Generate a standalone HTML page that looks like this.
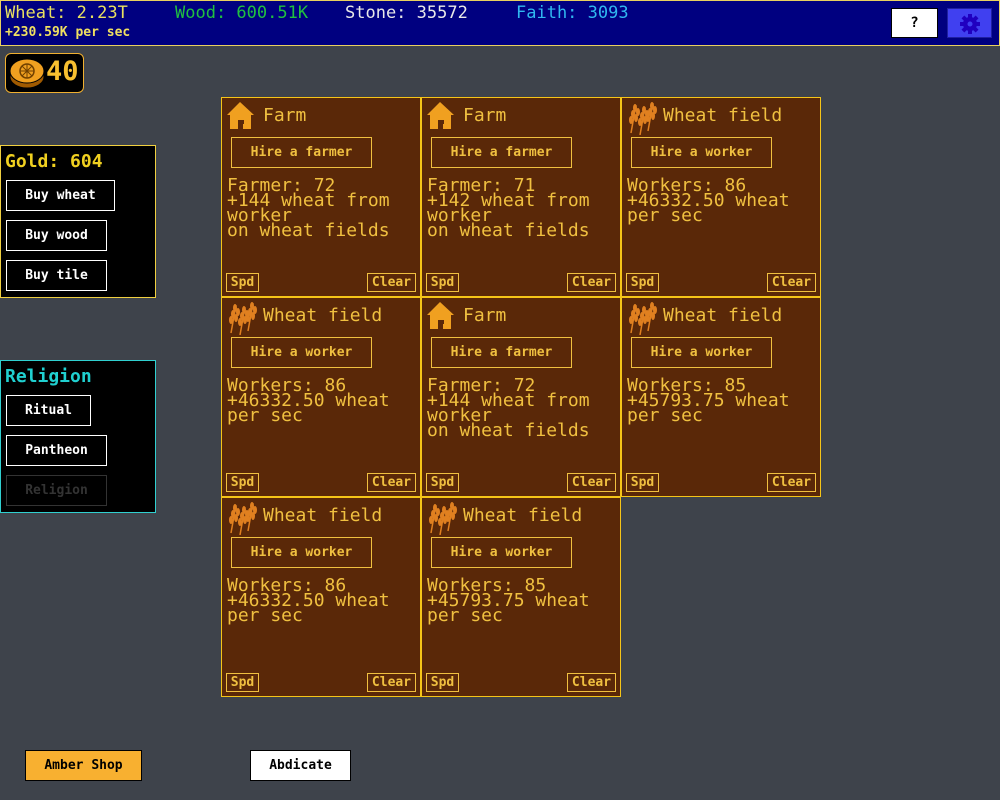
<!DOCTYPE html>
<html><head><style>
*{box-sizing:border-box;margin:0;padding:0}
body{width:1000px;height:800px;background:#3e434b;font-family:"DejaVu Sans Mono","Liberation Mono",monospace;position:relative;overflow:hidden}
.hdr{position:absolute;left:0;top:0;width:1000px;height:46px;background:#000080;border:1px solid #e8d060;border-top:1px solid #e8d060}
.hdr span{position:absolute;top:2px;font-size:17px}
.abs{position:absolute}
.tile{position:absolute;width:200px;height:200px;background:#5a2808;border:1px solid #f5c518;color:#f0c040}
.tile .t{position:absolute;left:41px;top:7px;font-size:18px}
.tile .ic{position:absolute;left:4px;top:3px}
.tile .hb{position:absolute;left:9px;top:39px;width:141px;height:31px;border:1px solid #f0c040;font-size:13px;text-align:center;line-height:29px;font-weight:bold}
.tile .s{position:absolute;left:5px;top:80px;font-size:18px;line-height:15px;white-space:pre}
.tile .sp{position:absolute;left:4px;top:175px;width:33px;height:19px;border:1px solid #f0c040;font-size:13px;line-height:17px;text-align:center;font-weight:bold}
.tile .cl{position:absolute;right:4px;top:175px;width:49px;height:19px;border:1px solid #f0c040;font-size:13px;line-height:17px;text-align:center;font-weight:bold}
.panel{position:absolute;background:#000}
.btn{position:absolute;left:5px;height:31px;border:1px solid #fff;color:#fff;font-size:13px;font-weight:bold;text-align:center;line-height:29px;background:#000}
</style></head><body>
<div class="hdr">
<span style="left:4px;color:#e8e060">Wheat: 2.23T</span>
<span style="left:174px;color:#20c040">Wood: 600.51K</span>
<span style="left:344px;color:#e8e8e8">Stone: 35572</span>
<span style="left:515px;color:#30b8f0">Faith: 3093</span>
<span style="left:4px;top:24px;font-size:13px;font-weight:bold;color:#f0e060">+230.59K per sec</span>
<div class="abs" style="left:890px;top:7px;width:47px;height:30px;background:#fff;border:1px solid #000;text-align:center;line-height:28px;font-size:14px;font-weight:bold">?</div>
<div class="abs" style="left:946px;top:7px;width:45px;height:30px;background:#4040f0;border:1px solid #2020a0">
<svg width="45" height="30" viewBox="0 0 45 30"><g fill="#2000c0" transform="translate(22 15)"><circle r="7"/><g id="tt"><rect x="-2" y="-10" width="4" height="20"/><rect x="-10" y="-2" width="20" height="4"/></g><use href="#tt" transform="rotate(45)"/></g><circle cx="22" cy="15" r="2.5" fill="#4040f0"/></svg></div>
</div>
<div class="abs" style="left:5px;top:53px;width:79px;height:40px;background:#000;border:1px solid #f0b030;border-radius:6px">
<svg class="abs" style="left:2px;top:2px" width="38" height="34" viewBox="0 0 38 34"><ellipse cx="19" cy="21" rx="17" ry="11" fill="#a05a00" stroke="#000"/><ellipse cx="19" cy="15" rx="17" ry="12" fill="#f0a020" stroke="#000"/><circle cx="19" cy="15" r="7" fill="none" stroke="#704000" stroke-width="1.5"/><path d="M12 15h14M19 8v14M14 10l10 10M24 10l-10 10" stroke="#704000"/></svg>
<span class="abs" style="left:40px;top:2px;font-size:27px;font-weight:bold;color:#f8c030">40</span>
</div>

<div class="panel" style="left:0;top:145px;width:156px;height:153px;border:1px solid #f0d040">
<div class="abs" style="left:4px;top:5px;color:#f0d020;font-size:18px;font-weight:bold">Gold: 604</div>
<div class="btn" style="top:34px;width:109px">Buy wheat</div>
<div class="btn" style="top:74px;width:101px">Buy wood</div>
<div class="btn" style="top:114px;width:101px">Buy tile</div>
</div>
<div class="panel" style="left:0;top:360px;width:156px;height:153px;border:1px solid #30d0d0">
<div class="abs" style="left:4px;top:5px;color:#20d0d0;font-size:18px;font-weight:bold">Religion</div>
<div class="btn" style="top:34px;width:85px">Ritual</div>
<div class="btn" style="top:74px;width:101px">Pantheon</div>
<div class="btn" style="top:114px;width:101px;border-color:#333;color:#333">Religion</div>
</div>

<svg width="0" height="0" style="position:absolute"><defs>
<g id="house"><path d="M14 1L1 14h3v14h8v-8h5v8h8V14h3z" fill="#f0a020"/><rect x="12" y="19" width="6" height="4" fill="#5a2808"/></g>
<g id="wheat" fill="#e08020"><g id="st"><path d="M5 32L10 4" stroke="#e08020" stroke-width="1.5"/><ellipse cx="9" cy="7" rx="2" ry="4"/><ellipse cx="7" cy="13" rx="2" ry="4"/><ellipse cx="12" cy="11" rx="2" ry="4"/><ellipse cx="10" cy="17" rx="2" ry="4"/><ellipse cx="5" cy="19" rx="2" ry="4"/></g><use href="#st" x="9" y="2"/><use href="#st" x="17" y="-2"/></g>
</defs></svg>

<div class="tile" style="left:221px;top:97px"><svg class="ic" width="30" height="32"><use href="#house"/></svg><div class="t">Farm</div><div class="hb">Hire a farmer</div><div class="s">Farmer: 72
+144 wheat from
worker
on wheat fields</div><div class="sp">Spd</div><div class="cl">Clear</div></div>
<div class="tile" style="left:421px;top:97px"><svg class="ic" width="30" height="32"><use href="#house"/></svg><div class="t">Farm</div><div class="hb">Hire a farmer</div><div class="s">Farmer: 71
+142 wheat from
worker
on wheat fields</div><div class="sp">Spd</div><div class="cl">Clear</div></div>
<div class="tile" style="left:621px;top:97px"><svg class="ic" width="34" height="34"><use href="#wheat"/></svg><div class="t">Wheat field</div><div class="hb">Hire a worker</div><div class="s">Workers: 86
+46332.50 wheat
per sec</div><div class="sp">Spd</div><div class="cl">Clear</div></div>

<div class="tile" style="left:221px;top:297px"><svg class="ic" width="34" height="34"><use href="#wheat"/></svg><div class="t">Wheat field</div><div class="hb">Hire a worker</div><div class="s">Workers: 86
+46332.50 wheat
per sec</div><div class="sp">Spd</div><div class="cl">Clear</div></div>
<div class="tile" style="left:421px;top:297px"><svg class="ic" width="30" height="32"><use href="#house"/></svg><div class="t">Farm</div><div class="hb">Hire a farmer</div><div class="s">Farmer: 72
+144 wheat from
worker
on wheat fields</div><div class="sp">Spd</div><div class="cl">Clear</div></div>
<div class="tile" style="left:621px;top:297px"><svg class="ic" width="34" height="34"><use href="#wheat"/></svg><div class="t">Wheat field</div><div class="hb">Hire a worker</div><div class="s">Workers: 85
+45793.75 wheat
per sec</div><div class="sp">Spd</div><div class="cl">Clear</div></div>

<div class="tile" style="left:221px;top:497px"><svg class="ic" width="34" height="34"><use href="#wheat"/></svg><div class="t">Wheat field</div><div class="hb">Hire a worker</div><div class="s">Workers: 86
+46332.50 wheat
per sec</div><div class="sp">Spd</div><div class="cl">Clear</div></div>
<div class="tile" style="left:421px;top:497px"><svg class="ic" width="34" height="34"><use href="#wheat"/></svg><div class="t">Wheat field</div><div class="hb">Hire a worker</div><div class="s">Workers: 85
+45793.75 wheat
per sec</div><div class="sp">Spd</div><div class="cl">Clear</div></div>

<div class="abs" style="left:25px;top:750px;width:117px;height:31px;background:#f8b030;border:1px solid #000;font-size:13px;font-weight:bold;text-align:center;line-height:29px">Amber Shop</div>
<div class="abs" style="left:250px;top:750px;width:101px;height:31px;background:#fff;border:1px solid #000;font-size:13px;font-weight:bold;text-align:center;line-height:29px">Abdicate</div>
</body></html>
